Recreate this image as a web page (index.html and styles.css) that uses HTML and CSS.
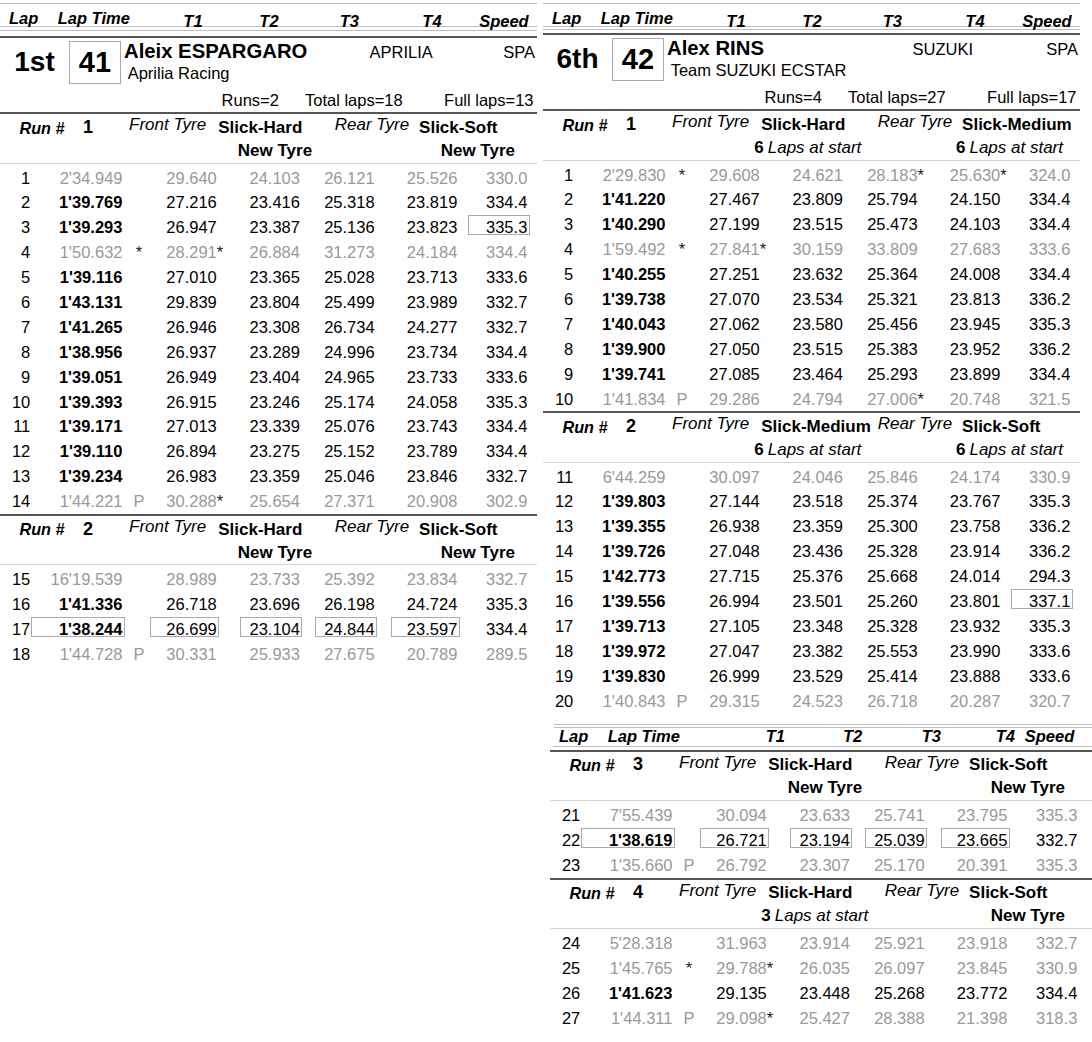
FILE: index.html
```html
<!DOCTYPE html>
<html lang="en">
<head>
<meta charset="utf-8">
<title>Lap analysis</title>
<link rel="stylesheet" href="styles.css">
</head>
<body>
<div class="sheet">

<section class="page left">
  <div class="colhead">
    <div class="rule"></div>
    <div class="htext"><span>Lap</span><span>Lap Time</span><span class="hc-t">T1</span><span class="hc-t">T2</span><span class="hc-t">T3</span><span class="hc-t">T4</span><span class="hc-sp">Speed</span></div>
    <div class="rule"></div>
    <div class="rule r2"></div>
  </div>
  <div class="rider">
    <div class="rider-top">
      <div class="pos">1st</div>
      <div class="num">41</div>
      <div class="info">
        <div class="name-row"><span class="name">Aleix ESPARGARO</span><span>APRILIA</span><span>SPA</span></div>
        <div class="team">Aprilia Racing</div>
      </div>
    </div>
    <div class="runs-row"><span class="runs">Runs=2</span><span>Total laps=18</span><span class="full">Full laps=13</span></div>
  </div>

  <div class="run-head">
    <div class="rh1"><span class="runlbl">Run #</span><span class="runno">1</span><span class="tlbl">Front Tyre</span><span class="cmp">Slick-Hard</span><span class="tlbl">Rear Tyre</span><span class="cmp">Slick-Soft</span></div>
    <div class="rh2"><span class="f nt">New Tyre</span><span class="r nt">New Tyre</span></div>
  </div>
  <div class="rows">
    <div class="row g"><span class="lap">1</span><span class="tm">2'34.949</span><span class="mk"></span><span class="t1">29.640</span><span class="t2">24.103</span><span class="t3">26.121</span><span class="t4">25.526</span><span class="sp">330.0</span></div>
    <div class="row"><span class="lap">2</span><span class="tm">1'39.769</span><span class="mk"></span><span class="t1">27.216</span><span class="t2">23.416</span><span class="t3">25.318</span><span class="t4">23.819</span><span class="sp">334.4</span></div>
    <div class="row"><span class="lap">3</span><span class="tm">1'39.293</span><span class="mk"></span><span class="t1">26.947</span><span class="t2">23.387</span><span class="t3">25.136</span><span class="t4">23.823</span><span class="sp bx">335.3</span></div>
    <div class="row g"><span class="lap">4</span><span class="tm">1'50.632</span><span class="mk st">*</span><span class="t1">28.291<span class="star">*</span></span><span class="t2">26.884</span><span class="t3">31.273</span><span class="t4">24.184</span><span class="sp">334.4</span></div>
    <div class="row"><span class="lap">5</span><span class="tm">1'39.116</span><span class="mk"></span><span class="t1">27.010</span><span class="t2">23.365</span><span class="t3">25.028</span><span class="t4">23.713</span><span class="sp">333.6</span></div>
    <div class="row"><span class="lap">6</span><span class="tm">1'43.131</span><span class="mk"></span><span class="t1">29.839</span><span class="t2">23.804</span><span class="t3">25.499</span><span class="t4">23.989</span><span class="sp">332.7</span></div>
    <div class="row"><span class="lap">7</span><span class="tm">1'41.265</span><span class="mk"></span><span class="t1">26.946</span><span class="t2">23.308</span><span class="t3">26.734</span><span class="t4">24.277</span><span class="sp">332.7</span></div>
    <div class="row"><span class="lap">8</span><span class="tm">1'38.956</span><span class="mk"></span><span class="t1">26.937</span><span class="t2">23.289</span><span class="t3">24.996</span><span class="t4">23.734</span><span class="sp">334.4</span></div>
    <div class="row"><span class="lap">9</span><span class="tm">1'39.051</span><span class="mk"></span><span class="t1">26.949</span><span class="t2">23.404</span><span class="t3">24.965</span><span class="t4">23.733</span><span class="sp">333.6</span></div>
    <div class="row"><span class="lap">10</span><span class="tm">1'39.393</span><span class="mk"></span><span class="t1">26.915</span><span class="t2">23.246</span><span class="t3">25.174</span><span class="t4">24.058</span><span class="sp">335.3</span></div>
    <div class="row"><span class="lap">11</span><span class="tm">1'39.171</span><span class="mk"></span><span class="t1">27.013</span><span class="t2">23.339</span><span class="t3">25.076</span><span class="t4">23.743</span><span class="sp">334.4</span></div>
    <div class="row"><span class="lap">12</span><span class="tm">1'39.110</span><span class="mk"></span><span class="t1">26.894</span><span class="t2">23.275</span><span class="t3">25.152</span><span class="t4">23.789</span><span class="sp">334.4</span></div>
    <div class="row"><span class="lap">13</span><span class="tm">1'39.234</span><span class="mk"></span><span class="t1">26.983</span><span class="t2">23.359</span><span class="t3">25.046</span><span class="t4">23.846</span><span class="sp">332.7</span></div>
    <div class="row g"><span class="lap">14</span><span class="tm">1'44.221</span><span class="mk">P</span><span class="t1">30.288<span class="star">*</span></span><span class="t2">25.654</span><span class="t3">27.371</span><span class="t4">20.908</span><span class="sp">302.9</span></div>
  </div>

  <div class="run-head">
    <div class="rh1"><span class="runlbl">Run #</span><span class="runno">2</span><span class="tlbl">Front Tyre</span><span class="cmp">Slick-Hard</span><span class="tlbl">Rear Tyre</span><span class="cmp">Slick-Soft</span></div>
    <div class="rh2"><span class="f nt">New Tyre</span><span class="r nt">New Tyre</span></div>
  </div>
  <div class="rows">
    <div class="row g"><span class="lap">15</span><span class="tm">16'19.539</span><span class="mk"></span><span class="t1">28.989</span><span class="t2">23.733</span><span class="t3">25.392</span><span class="t4">23.834</span><span class="sp">332.7</span></div>
    <div class="row"><span class="lap">16</span><span class="tm">1'41.336</span><span class="mk"></span><span class="t1">26.718</span><span class="t2">23.696</span><span class="t3">26.198</span><span class="t4">24.724</span><span class="sp">335.3</span></div>
    <div class="row"><span class="lap">17</span><span class="tm bx">1'38.244</span><span class="mk"></span><span class="t1 bx">26.699</span><span class="t2 bx">23.104</span><span class="t3 bx">24.844</span><span class="t4 bx">23.597</span><span class="sp">334.4</span></div>
    <div class="row g"><span class="lap">18</span><span class="tm">1'44.728</span><span class="mk">P</span><span class="t1">30.331</span><span class="t2">25.933</span><span class="t3">27.675</span><span class="t4">20.789</span><span class="sp">289.5</span></div>
  </div>
</section>

<section class="col-right">
  <div class="page upper">
    <div class="colhead tight">
      <div class="rule"></div>
      <div class="htext"><span>Lap</span><span>Lap Time</span><span class="hc-t">T1</span><span class="hc-t">T2</span><span class="hc-t">T3</span><span class="hc-t">T4</span><span class="hc-sp">Speed</span></div>
      <div class="rule"></div>
      <div class="rule r2"></div>
    </div>
    <div class="rider">
      <div class="rider-top">
        <div class="pos">6th</div>
        <div class="num">42</div>
        <div class="info">
          <div class="name-row"><span class="name">Alex RINS</span><span>SUZUKI</span><span>SPA</span></div>
          <div class="team">Team SUZUKI ECSTAR</div>
        </div>
      </div>
      <div class="runs-row"><span class="runs">Runs=4</span><span>Total laps=27</span><span class="full">Full laps=17</span></div>
    </div>

    <div class="run-head">
      <div class="rh1"><span class="runlbl">Run #</span><span class="runno">1</span><span class="tlbl">Front Tyre</span><span class="cmp">Slick-Hard</span><span class="tlbl">Rear Tyre</span><span class="cmp">Slick-Medium</span></div>
      <div class="rh2"><span class="f ls"><b>6</b><i>Laps at start</i></span><span class="r ls"><b>6</b><i>Laps at start</i></span></div>
    </div>
    <div class="rows">
      <div class="row g"><span class="lap">1</span><span class="tm">2'29.830</span><span class="mk st">*</span><span class="t1">29.608</span><span class="t2">24.621</span><span class="t3">28.183<span class="star">*</span></span><span class="t4">25.630<span class="star">*</span></span><span class="sp">324.0</span></div>
      <div class="row"><span class="lap">2</span><span class="tm">1'41.220</span><span class="mk"></span><span class="t1">27.467</span><span class="t2">23.809</span><span class="t3">25.794</span><span class="t4">24.150</span><span class="sp">334.4</span></div>
      <div class="row"><span class="lap">3</span><span class="tm">1'40.290</span><span class="mk"></span><span class="t1">27.199</span><span class="t2">23.515</span><span class="t3">25.473</span><span class="t4">24.103</span><span class="sp">334.4</span></div>
      <div class="row g"><span class="lap">4</span><span class="tm">1'59.492</span><span class="mk st">*</span><span class="t1">27.841<span class="star">*</span></span><span class="t2">30.159</span><span class="t3">33.809</span><span class="t4">27.683</span><span class="sp">333.6</span></div>
      <div class="row"><span class="lap">5</span><span class="tm">1'40.255</span><span class="mk"></span><span class="t1">27.251</span><span class="t2">23.632</span><span class="t3">25.364</span><span class="t4">24.008</span><span class="sp">334.4</span></div>
      <div class="row"><span class="lap">6</span><span class="tm">1'39.738</span><span class="mk"></span><span class="t1">27.070</span><span class="t2">23.534</span><span class="t3">25.321</span><span class="t4">23.813</span><span class="sp">336.2</span></div>
      <div class="row"><span class="lap">7</span><span class="tm">1'40.043</span><span class="mk"></span><span class="t1">27.062</span><span class="t2">23.580</span><span class="t3">25.456</span><span class="t4">23.945</span><span class="sp">335.3</span></div>
      <div class="row"><span class="lap">8</span><span class="tm">1'39.900</span><span class="mk"></span><span class="t1">27.050</span><span class="t2">23.515</span><span class="t3">25.383</span><span class="t4">23.952</span><span class="sp">336.2</span></div>
      <div class="row"><span class="lap">9</span><span class="tm">1'39.741</span><span class="mk"></span><span class="t1">27.085</span><span class="t2">23.464</span><span class="t3">25.293</span><span class="t4">23.899</span><span class="sp">334.4</span></div>
      <div class="row g"><span class="lap">10</span><span class="tm">1'41.834</span><span class="mk">P</span><span class="t1">29.286</span><span class="t2">24.794</span><span class="t3">27.006<span class="star">*</span></span><span class="t4">20.748</span><span class="sp">321.5</span></div>
    </div>

    <div class="run-head">
      <div class="rh1"><span class="runlbl">Run #</span><span class="runno">2</span><span class="tlbl">Front Tyre</span><span class="cmp">Slick-Medium</span><span class="tlbl">Rear Tyre</span><span class="cmp">Slick-Soft</span></div>
      <div class="rh2"><span class="f ls"><b>6</b><i>Laps at start</i></span><span class="r ls"><b>6</b><i>Laps at start</i></span></div>
    </div>
    <div class="rows">
      <div class="row g"><span class="lap">11</span><span class="tm">6'44.259</span><span class="mk"></span><span class="t1">30.097</span><span class="t2">24.046</span><span class="t3">25.846</span><span class="t4">24.174</span><span class="sp">330.9</span></div>
      <div class="row"><span class="lap">12</span><span class="tm">1'39.803</span><span class="mk"></span><span class="t1">27.144</span><span class="t2">23.518</span><span class="t3">25.374</span><span class="t4">23.767</span><span class="sp">335.3</span></div>
      <div class="row"><span class="lap">13</span><span class="tm">1'39.355</span><span class="mk"></span><span class="t1">26.938</span><span class="t2">23.359</span><span class="t3">25.300</span><span class="t4">23.758</span><span class="sp">336.2</span></div>
      <div class="row"><span class="lap">14</span><span class="tm">1'39.726</span><span class="mk"></span><span class="t1">27.048</span><span class="t2">23.436</span><span class="t3">25.328</span><span class="t4">23.914</span><span class="sp">336.2</span></div>
      <div class="row"><span class="lap">15</span><span class="tm">1'42.773</span><span class="mk"></span><span class="t1">27.715</span><span class="t2">25.376</span><span class="t3">25.668</span><span class="t4">24.014</span><span class="sp">294.3</span></div>
      <div class="row"><span class="lap">16</span><span class="tm">1'39.556</span><span class="mk"></span><span class="t1">26.994</span><span class="t2">23.501</span><span class="t3">25.260</span><span class="t4">23.801</span><span class="sp bx">337.1</span></div>
      <div class="row"><span class="lap">17</span><span class="tm">1'39.713</span><span class="mk"></span><span class="t1">27.105</span><span class="t2">23.348</span><span class="t3">25.328</span><span class="t4">23.932</span><span class="sp">335.3</span></div>
      <div class="row"><span class="lap">18</span><span class="tm">1'39.972</span><span class="mk"></span><span class="t1">27.047</span><span class="t2">23.382</span><span class="t3">25.553</span><span class="t4">23.990</span><span class="sp">333.6</span></div>
      <div class="row"><span class="lap">19</span><span class="tm">1'39.830</span><span class="mk"></span><span class="t1">26.999</span><span class="t2">23.529</span><span class="t3">25.414</span><span class="t4">23.888</span><span class="sp">333.6</span></div>
      <div class="row g"><span class="lap">20</span><span class="tm">1'40.843</span><span class="mk">P</span><span class="t1">29.315</span><span class="t2">24.523</span><span class="t3">26.718</span><span class="t4">20.287</span><span class="sp">320.7</span></div>
    </div>
  </div>

  <div class="page cont">
    <div class="conthead">
      <div class="rule"></div>
      <div class="rule r2"></div>
      <div class="htext2"><span>Lap</span><span>Lap Time</span><span>T1</span><span>T2</span><span>T3</span><span>T4</span><span>Speed</span></div>
      <div class="rule r3"></div>
    </div>
    <div class="run-head">
      <div class="rh1"><span class="runlbl">Run #</span><span class="runno">3</span><span class="tlbl">Front Tyre</span><span class="cmp">Slick-Hard</span><span class="tlbl">Rear Tyre</span><span class="cmp">Slick-Soft</span></div>
      <div class="rh2"><span class="f nt">New Tyre</span><span class="r nt">New Tyre</span></div>
    </div>
    <div class="rows">
      <div class="row g"><span class="lap">21</span><span class="tm">7'55.439</span><span class="mk"></span><span class="t1">30.094</span><span class="t2">23.633</span><span class="t3">25.741</span><span class="t4">23.795</span><span class="sp">335.3</span></div>
      <div class="row"><span class="lap">22</span><span class="tm bx">1'38.619</span><span class="mk"></span><span class="t1 bx">26.721</span><span class="t2 bx">23.194</span><span class="t3 bx">25.039</span><span class="t4 bx">23.665</span><span class="sp">332.7</span></div>
      <div class="row g"><span class="lap">23</span><span class="tm">1'35.660</span><span class="mk">P</span><span class="t1">26.792</span><span class="t2">23.307</span><span class="t3">25.170</span><span class="t4">20.391</span><span class="sp">335.3</span></div>
    </div>
    <div class="run-head">
      <div class="rh1"><span class="runlbl">Run #</span><span class="runno">4</span><span class="tlbl">Front Tyre</span><span class="cmp">Slick-Hard</span><span class="tlbl">Rear Tyre</span><span class="cmp">Slick-Soft</span></div>
      <div class="rh2"><span class="f ls"><b>3</b><i>Laps at start</i></span><span class="r nt">New Tyre</span></div>
    </div>
    <div class="rows">
      <div class="row g"><span class="lap">24</span><span class="tm">5'28.318</span><span class="mk"></span><span class="t1">31.963</span><span class="t2">23.914</span><span class="t3">25.921</span><span class="t4">23.918</span><span class="sp">332.7</span></div>
      <div class="row g"><span class="lap">25</span><span class="tm">1'45.765</span><span class="mk st">*</span><span class="t1">29.788<span class="star">*</span></span><span class="t2">26.035</span><span class="t3">26.097</span><span class="t4">23.845</span><span class="sp">330.9</span></div>
      <div class="row"><span class="lap">26</span><span class="tm">1'41.623</span><span class="mk"></span><span class="t1">29.135</span><span class="t2">23.448</span><span class="t3">25.268</span><span class="t4">23.772</span><span class="sp">334.4</span></div>
      <div class="row g"><span class="lap">27</span><span class="tm">1'44.311</span><span class="mk">P</span><span class="t1">29.098<span class="star">*</span></span><span class="t2">25.427</span><span class="t3">28.388</span><span class="t4">21.398</span><span class="sp">318.3</span></div>
    </div>
  </div>
</section>

</div>
</body>
</html>
```
FILE: styles.css
```css
* { box-sizing: border-box; margin: 0; padding: 0; }
html, body { background: #fff; }
body {
  width: 1092px;
  height: 1042px;
  overflow: hidden;
  font-family: "Liberation Sans", Arial, sans-serif;
  font-size: 16.5px;
  color: #000;
}
.sheet {
  display: grid;
  grid-template-columns: 537px 549px;
  column-gap: 6px;
  align-items: start;
}
.page { width: 537px; }
.page.cont { width: 542px; margin-left: 7px; }

/* page header */
.rule { height: 1px; background: #bdbdbd; }
.colhead { padding-top: 3px; padding-bottom: 5.3px; }
.colhead .r2 { margin-top: 3px; }
.colhead.tight { padding-bottom: 3.3px; }
.colhead.tight .r2 { margin-top: 2px; }
.htext {
  height: 22px;
  padding-top: 2.6px;
  padding-left: 9px;
  line-height: 22px;
  display: grid;
  grid-template-columns: 48.7px 102.3px 66px 86px 74.8px 90.4px 51.5px;
  font-weight: bold;
  font-style: italic;
  white-space: nowrap;
}
.htext .hc-t { text-align: center; padding-top: 3.2px; }
.htext .hc-sp { text-align: right; padding-top: 3.2px; }

.conthead { padding-top: 10.8px; padding-bottom: 3px; }
.conthead .rule { margin-left: 4px; }
.conthead .r2 { margin-top: 2px; }
.conthead .r3 { margin-left: 2.7px; }
.htext2 {
  height: 17.7px;
  line-height: 17.7px;
  padding-left: 9px;
  display: grid;
  grid-template-columns: 48.7px 158px 77.3px 78.7px 74px 29.1px auto;
  font-weight: bold;
  font-style: italic;
  white-space: nowrap;
}

/* rider block */
.rider { border-top: 2px solid #555; height: 76.2px; }
.rider-top { display: flex; height: 52px; }
.pos {
  width: 69px;
  text-align: center;
  font-size: 28px;
  font-weight: bold;
  line-height: 28px;
  padding-top: 9.7px;
}
.num {
  width: 52px;
  height: 43px;
  margin-top: 2.7px;
  border: 1px solid #aaa;
  display: flex;
  align-items: center;
  justify-content: center;
  font-size: 29px;
  font-weight: bold;
  line-height: 29px;
}
.info { flex: 1; padding-left: 3px; padding-top: 2.2px; }
.name-row {
  display: grid;
  grid-template-columns: 245.5px 1fr auto;
  align-items: baseline;
  padding-right: 2px;
  line-height: 22px;
  white-space: nowrap;
}
.name { font-size: 20.3px; font-weight: bold; }
.team { padding-left: 3.7px; line-height: 21px; }
.runs-row {
  display: flex;
  height: 20px;
  line-height: 20px;
  padding-left: 221.6px;
  padding-right: 3.5px;
  white-space: nowrap;
}
.runs { width: 83.4px; }
.full { margin-left: auto; }

/* run header */
.run-head {
  border-top: 2px solid #555;
  border-bottom: 1px solid #d6d6d6;
  height: 51.3px;
  padding-top: 1.5px;
  font-size: 17px;
  white-space: nowrap;
}
.rh1 {
  display: grid;
  grid-template-columns: 63.5px 46px 89.2px 116.6px 84.3px auto;
  padding-left: 19.5px;
  height: 23px;
  line-height: 23px;
}
.runlbl { font-size: 16.2px; font-weight: bold; font-style: italic; margin-top: 0.6px; }
.runno { font-size: 18px; font-weight: bold; }
.tlbl { font-style: italic; margin-top: -2.6px; }
.cmp { font-weight: bold; }
.rh2 {
  display: grid;
  grid-template-columns: 335.3px 201.7px;
  height: 23px;
  line-height: 23px;
  text-align: right;
}
.rh2 .nt { font-weight: bold; }
.rh2 .f.nt { padding-right: 23.2px; }
.rh2 .r.nt { padding-right: 22px; }
.rh2 .ls { padding-right: 17px; }
.ls b { font-weight: bold; margin-right: 4px; }
.ls i { font-style: italic; }

/* lap rows */
.rows { padding-top: 1.8px; }
.row {
  display: grid;
  grid-template-columns: 31.3px 93.7px 25.2px 69.1px 21px 62.2px 12.6px 62.1px 13.5px 69.2px 8.1px 61.9px;
  height: 24.9px;
}
.row > span {
  height: 20px;
  border: 1px solid transparent;
  line-height: 22px;
  text-align: right;
  padding-right: 1.5px;
  white-space: nowrap;
}
.row .lap { grid-column: 1; padding-right: 0; }
.row .tm { grid-column: 2; font-weight: bold; }
.row .mk { grid-column: 3; text-align: center; padding-left: 2.8px; padding-right: 0; }
.row .t1 { grid-column: 4; }
.row .t2 { grid-column: 6; }
.row .t3 { grid-column: 8; }
.row .t4 { grid-column: 10; }
.row .sp { grid-column: 12; }
.row.g > span { color: #999; }
.row.g > .lap { color: #000; }
.row.g > .tm { font-weight: normal; }
.row .mk.st { color: #222; }
.star { margin-right: -6.4px; color: #222; }
.row > .bx { border-color: #aaa; }
```
